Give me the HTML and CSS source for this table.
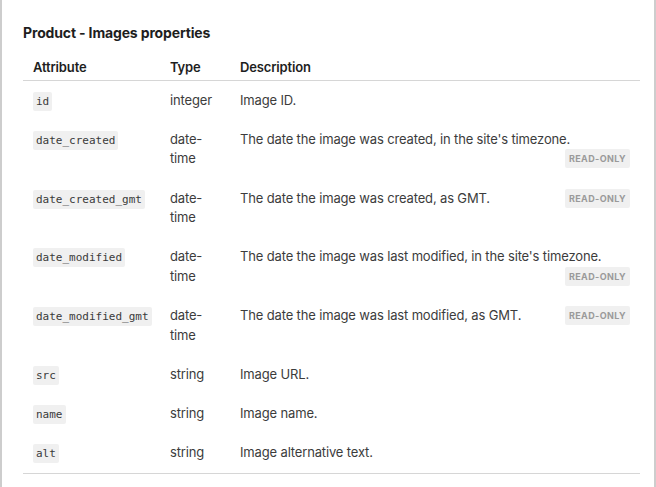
FILE: index.html
```html
<!DOCTYPE html>
<html>
<head>
<meta charset="UTF-8">
<title>Product - Images properties</title>
<link rel="stylesheet" href="styles.css">
</head>
<body>
	<div class="frame">
		<h3 class="title">Product - Images properties</h3>
		<table class="props">
			<colgroup>
				<col class="col-attr">
				<col class="col-type">
				<col class="col-desc">
			</colgroup>
			<thead>
				<tr>
					<th>Attribute</th>
					<th>Type</th>
					<th>Description</th>
				</tr>
			</thead>
			<tbody>
				<tr>
					<td><code>id</code></td>
					<td>integer</td>
					<td><div class="desc"><span>Image ID.</span></div></td>
				</tr>
				<tr>
					<td><code>date_created</code></td>
					<td>date-time</td>
					<td><div class="desc"><span>The date the image was created, in the site's timezone.</span><span class="badge">read-only</span></div></td>
				</tr>
				<tr>
					<td><code>date_created_gmt</code></td>
					<td>date-time</td>
					<td><div class="desc"><span>The date the image was created, as GMT.</span><span class="badge">read-only</span></div></td>
				</tr>
				<tr>
					<td><code>date_modified</code></td>
					<td>date-time</td>
					<td><div class="desc"><span>The date the image was last modified, in the site's timezone.</span><span class="badge">read-only</span></div></td>
				</tr>
				<tr>
					<td><code>date_modified_gmt</code></td>
					<td>date-time</td>
					<td><div class="desc"><span>The date the image was last modified, as GMT.</span><span class="badge">read-only</span></div></td>
				</tr>
				<tr>
					<td><code>src</code></td>
					<td>string</td>
					<td><div class="desc"><span>Image URL.</span></div></td>
				</tr>
				<tr>
					<td><code>name</code></td>
					<td>string</td>
					<td><div class="desc"><span>Image name.</span></div></td>
				</tr>
				<tr>
					<td><code>alt</code></td>
					<td>string</td>
					<td><div class="desc"><span>Image alternative text.</span></div></td>
				</tr>
			</tbody>
		</table>
	</div>
</body>
</html>
```

FILE: styles.css
```css
* {
	padding: 0;
	margin: 0;
	box-sizing: border-box;
}

html, body {
	height: 100%;
}

body {
	font-family: Inter, "Liberation Sans", sans-serif;
	font-size: 13px;
	letter-spacing: -0.15px;
	color: #3c3c3c;
	background-color: #fff;
}

.frame {
	min-height: 100%;
	border-left: 2px solid #cdcdcd;
	border-right: 2px solid #cdcdcd;
	padding: 23px 14px 0 21px;
}

.title {
	font-size: 14px;
	line-height: 20px;
	font-weight: 700;
	color: #1e1e1e;
}

.props {
	width: 617px;
	margin-top: 11px;
	border-collapse: collapse;
	table-layout: fixed;
	line-height: 19.5px;
}

.col-attr {
	width: 137px;
}

.col-type {
	width: 70px;
}

.props th {
	text-align: left;
	font-weight: 600;
	color: #1e1e1e;
	padding: 4px 10px 2px;
	border-bottom: 1px solid #d6d6d6;
}

.props td {
	padding: 10px 10px 9.75px;
	vertical-align: top;
}

.props tbody tr:last-child td {
	border-bottom: 1px solid #d6d6d6;
}

.props code {
	font-family: "DejaVu Sans Mono", "Liberation Mono", monospace;
	font-size: 11px;
	line-height: 1;
	letter-spacing: 0;
	color: #3a3a3a;
	background-color: #f0f0f0;
	padding: 3px 3px;
	border-radius: 2px;
}

.desc {
	display: flex;
	flex-wrap: wrap;
	align-items: flex-start;
}

.badge {
	margin-left: auto;
	padding: 0 4px;
	font-size: 9px;
	line-height: 19px;
	font-weight: 700;
	letter-spacing: 0.4px;
	text-transform: uppercase;
	color: #9a9a9a;
	background-color: #f0f0f0;
	border-radius: 2px;
}
```
